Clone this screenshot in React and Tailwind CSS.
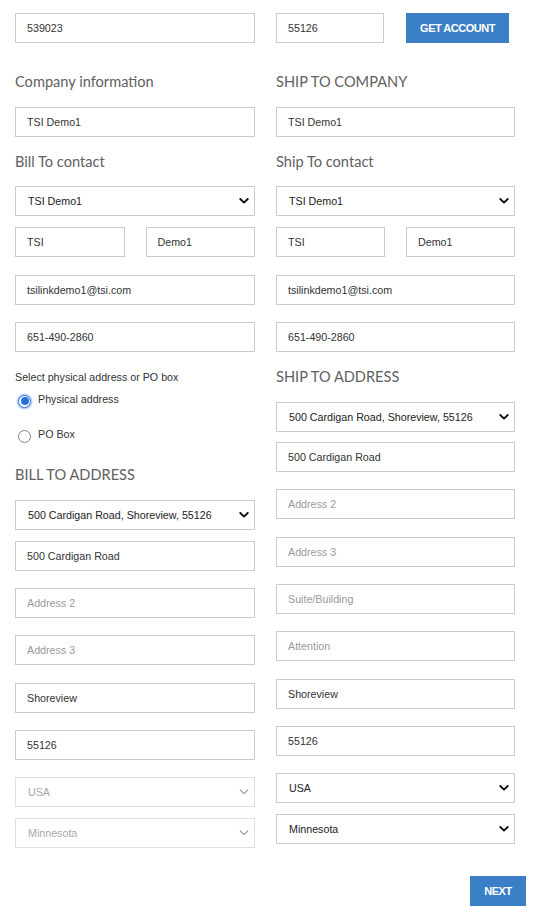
import React from "react";

const TXT = "font-['Liberation_Sans',Arial,sans-serif] text-[10.7px]";
const HEAD = "font-['Lato','Noto_Sans',sans-serif] font-normal text-[14.6px] leading-[21px] h-[20px] text-[#616161]";

function Field({ value, placeholder, mt = "" }) {
  return (
    <input
      readOnly
      defaultValue={value}
      placeholder={placeholder}
      className={`block w-full h-[30px] border border-[#cccccc] bg-white pl-[11px] text-[#333333] placeholder:text-[#9a9a9a] outline-none ${TXT} ${mt}`}
    />
  );
}

function Select({ value, disabled = false, mt = "" }) {
  return (
    <div className={`relative ${mt}`}>
      <select
        disabled={disabled}
        defaultValue={value}
        className={`block w-full h-[30px] appearance-none bg-white pl-[12px] outline-none ${TXT} ${
          disabled ? "border border-[#e0e0e0] text-[#a8a8a8]" : "border border-[#cccccc] text-[#222222]"
        }`}
      >
        <option>{value}</option>
      </select>
      <svg
        className="absolute right-[6px] top-1/2 -translate-y-1/2 pointer-events-none"
        width="10"
        height="6"
        viewBox="0 0 10 6"
      >
        <path
          d="M1.3 1 L5 4.6 L8.7 1"
          fill="none"
          stroke={disabled ? "#a0a0a0" : "#111111"}
          strokeWidth={disabled ? "1.3" : "1.9"}
          strokeLinecap="round"
          strokeLinejoin="round"
        />
      </svg>
    </div>
  );
}

function Heading({ children, mt = "" }) {
  return <div className={`${HEAD} ${mt}`}>{children}</div>;
}

function Radio({ checked, label, mt = "" }) {
  return (
    <div className={`flex items-center h-[20px] pl-[3px] gap-[7px] ${mt}`}>
      {checked ? (
        <span className="w-[13px] h-[13px] rounded-full border border-[#2a6fdc] bg-white flex items-center justify-center shadow-[0_0_0_1.5px_#b9d2f7]">
          <span className="w-[8px] h-[8px] rounded-full bg-[#2a6fdc]" />
        </span>
      ) : (
        <span className="w-[13px] h-[13px] rounded-full border border-[#808080] bg-white" />
      )}
      <span className={`${TXT} text-[#333333] -mt-[3px]`}>{label}</span>
    </div>
  );
}

export default function App() {
  return (
    <div className="w-[533px] bg-white pl-[15px] pt-[13px] pb-[9px]">
      <div className="grid grid-cols-[240px_239px] gap-x-[21px] items-start">
        {/* Left column */}
        <div className="flex flex-col">
          <Field value="539023" />
          <Heading mt="mt-[28px]">Company information</Heading>
          <Field value="TSI Demo1" mt="mt-[16px]" />
          <Heading mt="mt-[14px]">Bill To contact</Heading>
          <Select value="TSI Demo1" mt="mt-[15px]" />
          <div className="grid grid-cols-2 gap-x-[21px] mt-[11px]">
            <Field value="TSI" />
            <Field value="Demo1" />
          </div>
          <Field value="tsilinkdemo1@tsi.com" mt="mt-[18px]" />
          <Field value="651-490-2860" mt="mt-[17px]" />
          <div className={`${TXT} text-[#333333] h-[14px] leading-[14px] mt-[18px]`}>
            Select physical address or PO box
          </div>
          <Radio checked label="Physical address" mt="mt-[7px]" />
          <Radio label="PO Box" mt="mt-[15px]" />
          <Heading mt="mt-[18px]">BILL TO ADDRESS</Heading>
          <Select value="500 Cardigan Road, Shoreview, 55126" mt="mt-[16px]" />
          <Field value="500 Cardigan Road" mt="mt-[11px]" />
          <Field placeholder="Address 2" mt="mt-[17px]" />
          <Field placeholder="Address 3" mt="mt-[17px]" />
          <Field value="Shoreview" mt="mt-[18px]" />
          <Field value="55126" mt="mt-[17px]" />
          <Select value="USA" disabled mt="mt-[17px]" />
          <Select value="Minnesota" disabled mt="mt-[11px]" />
        </div>

        {/* Right column */}
        <div className="flex flex-col">
          <div className="flex gap-[22px]">
            <div className="w-[108px]">
              <Field value="55126" />
            </div>
            <button className="w-[103px] h-[30px] bg-[#3a7ec6] text-white font-['Liberation_Sans',Arial,sans-serif] font-bold text-[11px] tracking-[-0.5px]">
              GET ACCOUNT
            </button>
          </div>
          <Heading mt="mt-[28px]">SHIP TO COMPANY</Heading>
          <Field value="TSI Demo1" mt="mt-[16px]" />
          <Heading mt="mt-[14px]">Ship To contact</Heading>
          <Select value="TSI Demo1" mt="mt-[15px]" />
          <div className="grid grid-cols-2 gap-x-[21px] mt-[11px]">
            <Field value="TSI" />
            <Field value="Demo1" />
          </div>
          <Field value="tsilinkdemo1@tsi.com" mt="mt-[18px]" />
          <Field value="651-490-2860" mt="mt-[17px]" />
          <Heading mt="mt-[14px]">SHIP TO ADDRESS</Heading>
          <Select value="500 Cardigan Road, Shoreview, 55126" mt="mt-[16px]" />
          <Field value="500 Cardigan Road" mt="mt-[10px]" />
          <Field placeholder="Address 2" mt="mt-[17px]" />
          <Field placeholder="Address 3" mt="mt-[18px]" />
          <Field placeholder="Suite/Building" mt="mt-[17px]" />
          <Field placeholder="Attention" mt="mt-[17px]" />
          <Field value="Shoreview" mt="mt-[18px]" />
          <Field value="55126" mt="mt-[17px]" />
          <Select value="USA" mt="mt-[17px]" />
          <Select value="Minnesota" mt="mt-[11px]" />
        </div>
      </div>

      <div className="flex justify-end pr-[7px] mt-[28px]">
        <button className="w-[56px] h-[30px] bg-[#3a7ec6] text-white font-['Liberation_Sans',Arial,sans-serif] font-bold text-[11px] tracking-[-0.5px]">
          NEXT
        </button>
      </div>
    </div>
  );
}
